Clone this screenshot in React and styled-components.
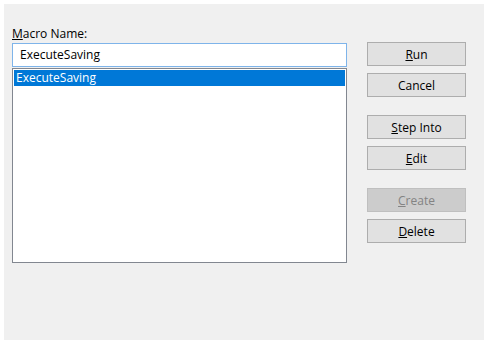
import styled, { createGlobalStyle } from 'styled-components';

const GlobalStyle = createGlobalStyle`
  body {
    margin: 0;
    background: #ffffff;
    font-family: "Open Sans", "Noto Sans", "Liberation Sans", sans-serif;
  }
`;

const Dialog = styled.div`
  box-sizing: border-box;
  margin: 4px 0 0 4px;
  width: 480px;
  height: 336px;
  background: #f0f0f0;
  padding: 21px 0 0 8px;
  display: flex;
  gap: 20px;
`;

const LeftColumn = styled.div`
  width: 335px;
  display: flex;
  flex-direction: column;
`;

const Label = styled.div`
  font-size: 12px;
  line-height: 17px;
  color: #000;
  margin-bottom: 1px;
`;

const NameInput = styled.div`
  box-sizing: border-box;
  height: 24px;
  background: #fff;
  border: 1px solid #7eb4ea;
  padding: 0 7px;
  font-size: 12px;
  line-height: 22px;
  color: #000;
`;

const MacroList = styled.div`
  box-sizing: border-box;
  margin-top: 1px;
  height: 195px;
  background: #fff;
  border: 1px solid #828790;
  padding: 1px;
`;

const MacroItem = styled.div`
  height: 16px;
  padding: 0 2px;
  font-size: 12px;
  line-height: 16px;
  background: ${(p) => (p.$selected ? '#0078d7' : 'transparent')};
  color: ${(p) => (p.$selected ? '#fff' : '#000')};
`;

const RightColumn = styled.div`
  padding-top: 17px;
  display: flex;
  flex-direction: column;
  gap: 18px;
`;

const ButtonGroup = styled.div`
  display: flex;
  flex-direction: column;
  gap: 7px;
`;

const DialogButton = styled.button`
  box-sizing: border-box;
  width: 99px;
  height: 24px;
  margin: 0;
  padding: 0;
  font-family: inherit;
  font-size: 12px;
  border: 1px solid ${(p) => (p.disabled ? '#bfbfbf' : '#adadad')};
  background: ${(p) => (p.disabled ? '#cccccc' : '#e1e1e1')};
  color: ${(p) => (p.disabled ? '#838383' : '#000')};
`;

const Key = styled.span`
  text-decoration: underline;
`;

function App() {
  return (
    <>
      <GlobalStyle />
      <Dialog>
        <LeftColumn>
          <Label>
            <Key>M</Key>acro Name:
          </Label>
          <NameInput>ExecuteSaving</NameInput>
          <MacroList>
            <MacroItem $selected>ExecuteSaving</MacroItem>
          </MacroList>
        </LeftColumn>
        <RightColumn>
          <ButtonGroup>
            <DialogButton>
              <Key>R</Key>un
            </DialogButton>
            <DialogButton>Cancel</DialogButton>
          </ButtonGroup>
          <ButtonGroup>
            <DialogButton>
              <Key>S</Key>tep Into
            </DialogButton>
            <DialogButton>
              <Key>E</Key>dit
            </DialogButton>
          </ButtonGroup>
          <ButtonGroup>
            <DialogButton disabled>
              <Key>C</Key>reate
            </DialogButton>
            <DialogButton>
              <Key>D</Key>elete
            </DialogButton>
          </ButtonGroup>
        </RightColumn>
      </Dialog>
    </>
  );
}

export default App;
